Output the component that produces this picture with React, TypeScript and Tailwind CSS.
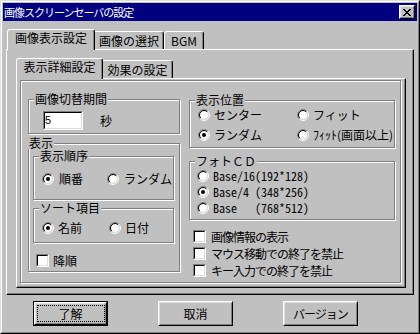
import React from "react";

function Radio({ checked }: { checked?: boolean }) {
  return (
    <svg width="12" height="12" viewBox="0 0 12 12" className="shrink-0 block">
      <circle cx="6" cy="6" r="4" fill="#ffffff" />
      <path d="M9.889 2.111 A5.5 5.5 0 0 0 2.111 9.889" fill="none" stroke="#808080" />
      <path d="M2.111 9.889 A5.5 5.5 0 0 0 9.889 2.111" fill="none" stroke="#ffffff" />
      <path d="M9.182 2.818 A4.5 4.5 0 0 0 2.818 9.182" fill="none" stroke="#000000" />
      <path d="M2.818 9.182 A4.5 4.5 0 0 0 9.182 2.818" fill="none" stroke="#dfdfdf" />
      {checked && <circle cx="6" cy="6" r="2" fill="#000000" />}
    </svg>
  );
}

function Check() {
  return (
    <div className="w-[13px] h-[13px] shrink-0 border border-t-[#808080] border-l-[#808080] border-r-white border-b-white">
      <div className="w-full h-full border border-t-black border-l-black border-r-[#dfdfdf] border-b-[#dfdfdf] bg-white" />
    </div>
  );
}

function Group({
  label,
  className,
  labelClass,
  children,
}: {
  label: string;
  className: string;
  labelClass: string;
  children?: React.ReactNode;
}) {
  return (
    <div className={`relative shrink-0 border border-[#808080] shadow-[inset_1px_1px_0_#fff,1px_1px_0_#fff] ${className}`}>
      <span className={`absolute top-[-7px] px-[1px] bg-[#c0c0c0] leading-[12px] whitespace-nowrap ${labelClass}`}>{label}</span>
      {children}
    </div>
  );
}

function SelTab({ className, children }: { className: string; children: React.ReactNode }) {
  return (
    <div
      className={`relative z-10 h-[21px] -mb-[1px] bg-[#c0c0c0] border-t border-l border-r border-t-white border-l-white border-r-black rounded-t-[3px] shadow-[inset_-1px_0_0_#808080] flex justify-center pt-[2px] leading-[12px] whitespace-nowrap ${className}`}
    >
      {children}
    </div>
  );
}

function Tab({ className, children }: { className: string; children: React.ReactNode }) {
  return (
    <div
      className={`h-[18px] bg-[#c0c0c0] border-t border-r border-t-white border-r-black rounded-tr-[3px] shadow-[inset_-1px_0_0_#808080] flex justify-center pt-[3px] leading-[12px] whitespace-nowrap ${className}`}
    >
      {children}
    </div>
  );
}

function Btn({ label, def, className }: { label: string; def?: boolean; className?: string }) {
  const inner = (
    <div className="w-full h-full border border-t-white border-l-white border-r-black border-b-black">
      <div className="w-full h-full border border-t-[#dfdfdf] border-l-[#dfdfdf] border-r-[#808080] border-b-[#808080] flex items-center justify-center leading-[12px] whitespace-nowrap">
        <span className={className}>{label}</span>
      </div>
    </div>
  );
  if (def) {
    return (
      <div className="relative w-[75px] h-[25px] border border-black shrink-0">
        {inner}
        <div className="absolute left-[3px] top-[3px] right-[2px] bottom-[3px] border border-dotted border-black" />
      </div>
    );
  }
  return <div className="w-[75px] h-[25px] shrink-0">{inner}</div>;
}

export default function App() {
  return (
    <div className="w-[420px] h-[334px] bg-[#c0c0c0] border border-t-[#dfdfdf] border-l-[#dfdfdf] border-r-black border-b-black font-['Noto_Sans_CJK_JP',sans-serif] text-[12px] leading-[12px] text-black select-none">
      <div className="w-full h-full border border-t-white border-l-white border-r-[#808080] border-b-[#808080] p-[1px] flex flex-col">
        {/* Title bar */}
        <div className="h-[18px] shrink-0 bg-[#000080] flex justify-between">
          <span className="text-white text-[11px] leading-[11px] tracking-[-1px] pl-[1px] pt-[4px] whitespace-nowrap">
            画像スクリーンセーバの設定
          </span>
          <div className="mt-[2px] mr-[2px] w-[16px] h-[14px] border border-t-white border-l-white border-r-black border-b-black">
            <div className="w-full h-full border border-t-[#dfdfdf] border-l-[#dfdfdf] border-r-[#808080] border-b-[#808080] bg-[#c0c0c0] flex items-center justify-center">
              <svg width="8" height="7" viewBox="0 0 8 7" shapeRendering="crispEdges" className="block">
                <path
                  d="M0 0h2v1H0z M6 0h2v1H6z M1 1h2v1H1z M5 1h2v1H5z M2 2h4v1H2z M3 3h2v1H3z M2 4h4v1H2z M1 5h2v1H1z M5 5h2v1H5z M0 6h2v1H0z M6 6h2v1H6z"
                  fill="#000"
                />
              </svg>
            </div>
          </div>
        </div>

        {/* Outer tab control */}
        <div className="mt-[8px] ml-[3px] w-[408px] flex flex-col">
          <div className="h-[20px] flex items-end pl-[1px]">
            <SelTab className="w-[88px]">画像表示設定</SelTab>
            <Tab className="w-[69px]">画像の選択</Tab>
            <Tab className="w-[40px] border-l border-l-white rounded-tl-[3px]">BGM</Tab>
          </div>
          <div className="h-[246px] border border-t-white border-l-white border-r-black border-b-black shadow-[inset_-1px_-1px_0_#808080] pt-[8px] pl-[9px]">
            {/* Inner tab control */}
            <div className="w-[390px] flex flex-col">
              <div className="h-[20px] flex items-end">
                <SelTab className="w-[87px]">表示詳細設定</SelTab>
                <Tab className="w-[70px]">効果の設定</Tab>
              </div>
              <div className="h-[210px] border border-t-white border-l-white border-r-black border-b-black shadow-[inset_-1px_-1px_0_#808080] pl-[3px] pt-[1px]">
                <div className="w-[381px] h-[203px] border border-[#808080] shadow-[inset_1px_1px_0_#fff,1px_1px_0_#fff] flex items-start pl-[7px] gap-[9px]">
                  {/* Left column */}
                  <div className="flex flex-col">
                    <Group label="画像切替期間" className="mt-[18px] w-[152px] h-[35px] pt-[11px] pl-[14px]" labelClass="left-[5px]">
                      <div className="flex items-center">
                        <div className="w-[40px] h-[19px] border border-t-[#808080] border-l-[#808080] border-r-white border-b-white">
                          <div className="w-full h-full border border-t-black border-l-black border-r-[#dfdfdf] border-b-[#dfdfdf] bg-white flex items-center font-['Liberation_Sans',sans-serif] text-[11px] leading-[11px]">
                            5
                          </div>
                        </div>
                        <span className="ml-[17px] pt-[1px]">秒</span>
                      </div>
                    </Group>
                    <Group label="表示" className="mt-[9px] w-[152px] h-[129px] pt-[12px] pl-[4px] flex flex-col" labelClass="left-[-1px]">
                      <Group label="表示順序" className="w-[141px] h-[44px] pt-[16px] pl-[8px]" labelClass="left-[5px]">
                        <div className="flex items-center">
                          <div className="w-[65px] flex items-center gap-[5px]">
                            <Radio checked />
                            <span>順番</span>
                          </div>
                          <div className="flex items-center gap-[5px]">
                            <Radio />
                            <span>ランダム</span>
                          </div>
                        </div>
                      </Group>
                      <Group label="ソート項目" className="mt-[8px] w-[141px] h-[35px] pt-[13px] pl-[8px]" labelClass="left-[5px]">
                        <div className="flex items-center">
                          <div className="w-[67px] flex items-center gap-[4px]">
                            <Radio checked />
                            <span>名前</span>
                          </div>
                          <div className="flex items-center gap-[4px]">
                            <Radio />
                            <span>日付</span>
                          </div>
                        </div>
                      </Group>
                      <div className="mt-[11px] ml-[3px] flex items-center gap-[4px]">
                        <Check />
                        <span>降順</span>
                      </div>
                    </Group>
                  </div>

                  {/* Right column */}
                  <div className="flex flex-col">
                    <Group label="表示位置" className="mt-[19px] w-[206px] h-[48px] pt-[8px] pl-[8px] flex flex-col gap-[8px]" labelClass="left-[5px]">
                      <div className="flex items-center">
                        <div className="w-[99px] flex items-center gap-[4px]">
                          <Radio />
                          <span>センター</span>
                        </div>
                        <div className="flex items-center gap-[4px]">
                          <Radio />
                          <span>フィット</span>
                        </div>
                      </div>
                      <div className="flex items-center">
                        <div className="w-[99px] flex items-center gap-[4px]">
                          <Radio checked />
                          <span>ランダム</span>
                        </div>
                        <div className="flex items-center gap-[4px]">
                          <Radio />
                          <span className="whitespace-nowrap">ﾌｨｯﾄ(画面以上)</span>
                        </div>
                      </div>
                    </Group>
                    <Group label="フォトＣＤ" className="mt-[13px] w-[206px] h-[59px] pt-[8px] pl-[7px] flex flex-col gap-[4px]" labelClass="left-[5px]">
                      {[
                        { t: "Base/16(192*128)", c: false },
                        { t: "Base/4 (348*256)", c: true },
                        { t: "Base   (768*512)", c: false },
                      ].map((r) => (
                        <div key={r.t} className="flex items-center gap-[4px]">
                          <Radio checked={r.c} />
                          <span className="whitespace-pre font-['Noto_Sans_Mono_CJK_JP','Liberation_Mono',monospace] text-[12px] leading-[12px]">
                            {r.t}
                          </span>
                        </div>
                      ))}
                    </Group>
                    <div className="mt-[10px] ml-[4px] flex flex-col gap-[4px]">
                      {["画像情報の表示", "マウス移動での終了を禁止", "キー入力での終了を禁止"].map((t) => (
                        <div key={t} className="flex items-center gap-[5px]">
                          <Check />
                          <span className="whitespace-nowrap tracking-[-1px]">{t}</span>
                        </div>
                      ))}
                    </div>
                  </div>
                </div>
              </div>
            </div>
          </div>
        </div>

        {/* Buttons */}
        <div className="mt-[6px] pl-[30px] flex gap-[50px]">
          <Btn label="了解" def />
          <Btn label="取消" />
          <Btn label="バージョン" className="tracking-[-1px]" />
        </div>
      </div>
    </div>
  );
}
